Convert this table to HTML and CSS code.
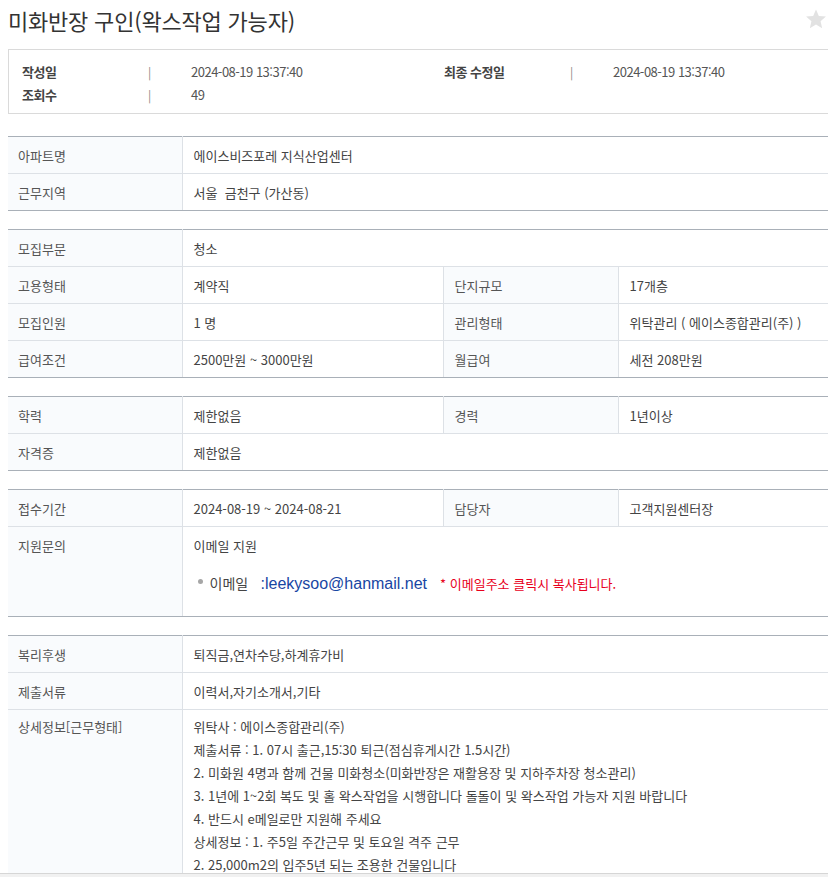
FILE: index.html
```html
<!DOCTYPE html>
<html lang="ko">
<head>
<meta charset="utf-8">
<title>미화반장 구인(왁스작업 가능자)</title>
<link rel="stylesheet" href="styles.css">
</head>
<body>
<div class="wrap">
  <div class="title-row">
    <h1 class="title">미화반장 구인(왁스작업 가능자)</h1>
    <svg class="star" viewBox="0 0 24 24" width="22" height="22"><path d="M12 1.5l3.1 7.1 7.7.7-5.8 5.1 1.7 7.6L12 18l-6.7 4 1.7-7.6-5.8-5.1 7.7-.7z" fill="#e2e2e2"/></svg>
  </div>

  <div class="meta">
    <div class="meta-row">
      <span class="m-label">작성일</span><span class="m-sep">|</span><span class="m-val">2024-08-19 13:37:40</span>
      <span class="m-label">최종 수정일</span><span class="m-sep">|</span><span class="m-val">2024-08-19 13:37:40</span>
    </div>
    <div class="meta-row">
      <span class="m-label">조회수</span><span class="m-sep">|</span><span class="m-val">49</span>
    </div>
  </div>

  <table class="info">
    <colgroup><col class="c1"><col class="c2"><col class="c3"><col class="c4"></colgroup>
    <tr><th>아파트명</th><td colspan="3">에이스비즈포레 지식산업센터</td></tr>
    <tr><th>근무지역</th><td colspan="3">서울 &nbsp;금천구 (가산동)</td></tr>
  </table>

  <table class="info">
    <colgroup><col class="c1"><col class="c2"><col class="c3"><col class="c4"></colgroup>
    <tr><th>모집부문</th><td colspan="3">청소</td></tr>
    <tr><th>고용형태</th><td>계약직</td><th class="th2">단지규모</th><td>17개층</td></tr>
    <tr><th>모집인원</th><td>1 명</td><th class="th2">관리형태</th><td>위탁관리 ( 에이스종합관리(주) )</td></tr>
    <tr><th>급여조건</th><td>2500만원 ~ 3000만원</td><th class="th2">월급여</th><td>세전 208만원</td></tr>
  </table>

  <table class="info">
    <colgroup><col class="c1"><col class="c2"><col class="c3"><col class="c4"></colgroup>
    <tr><th>학력</th><td>제한없음</td><th class="th2">경력</th><td>1년이상</td></tr>
    <tr><th>자격증</th><td colspan="3">제한없음</td></tr>
  </table>

  <table class="info">
    <colgroup><col class="c1"><col class="c2"><col class="c3"><col class="c4"></colgroup>
    <tr><th>접수기간</th><td>2024-08-19 ~ 2024-08-21</td><th class="th2">담당자</th><td>고객지원센터장</td></tr>
    <tr class="tall"><th>지원문의</th><td colspan="3">
      <div>이메일 지원</div>
      <div class="mail-line"><span class="bullet"></span><span class="mail-label">이메일</span><a class="mail" href="#">:leekysoo@hanmail.net</a><span class="note">* 이메일주소 클릭시 복사됩니다.</span></div>
    </td></tr>
  </table>

  <table class="info">
    <colgroup><col class="c1"><col class="c2"><col class="c3"><col class="c4"></colgroup>
    <tr><th>복리후생</th><td colspan="3">퇴직금,연차수당,하계휴가비</td></tr>
    <tr><th>제출서류</th><td colspan="3">이력서,자기소개서,기타</td></tr>
    <tr class="detail"><th>상세정보[근무형태]</th><td colspan="3">
      <div>위탁사 : 에이스종합관리(주)</div>
      <div>제출서류 : 1. 07시 출근,15:30 퇴근(점심휴게시간 1.5시간)</div>
      <div>2. 미화원 4명과 함께 건물 미화청소(미화반장은 재활용장 및 지하주차장 청소관리)</div>
      <div>3. 1년에 1~2회 복도 및 홀 왁스작업을 시행합니다 돌돌이 및 왁스작업 가능자 지원 바랍니다</div>
      <div>4. 반드시 e메일로만 지원해 주세요</div>
      <div>상세정보 : 1. 주5일 주간근무 및 토요일 격주 근무</div>
      <div>2. 25,000m2의 입주5년 되는 조용한 건물입니다</div>
    </td></tr>
  </table>
</div>
<div class="bottom-bar"></div>
</body>
</html>
```
FILE: styles.css
```css
html, body {
  margin: 0;
  padding: 0;
  overflow: hidden;
  background: #fff;
}
body {
  padding-left: 8px;
  font-family: "Noto Sans CJK KR", "Noto Sans", sans-serif;
  color: #444;
  font-size: 13px;
}
.wrap {
  width: 822px;
}
.title-row {
  display: flex;
  justify-content: space-between;
  align-items: center;
  height: 40px;
}
.title {
  margin: 0;
  font-size: 22px;
  font-weight: 400;
  color: #333;
  letter-spacing: -0.2px;
  line-height: 40px;
}
.star {
  margin-right: 3px;
  margin-top: -2px;
}
.meta {
  margin-top: 9px;
  border: 1px solid #dadada;
  padding: 10px 0 7px 13px;
  letter-spacing: -0.5px;
}
.meta-row {
  display: grid;
  grid-template-columns: 126px 43px 253px 126px 43px 1fr;
  line-height: 23px;
  height: 23px;
}
.m-label {
  font-weight: 700;
  color: #444;
}
.m-sep {
  color: #888;
  font-size: 12px;
}
.m-val {
  color: #555;
}
.info {
  width: 822px;
  table-layout: fixed;
  border-collapse: collapse;
  margin-top: 18px;
  border-top: 1px solid #a9b0b8;
  border-bottom: 1px solid #a9b0b8;
}
.meta + .info {
  margin-top: 22px;
}
.c1 { width: 174px; }
.c2 { width: 261px; }
.c3 { width: 175px; }
.info th, .info td {
  height: 36px;
  padding: 0;
  border-bottom: 1px solid #dde1e6;
  font-weight: 400;
  text-align: left;
  vertical-align: middle;
  line-height: 23px;
}
.info tr:last-child th, .info tr:last-child td {
  border-bottom: 1px solid #a9b0b8;
}
.info th {
  background: #f9fbfd;
  padding-left: 10px;
  color: #555;
  border-right: 1px solid #dde1e6;
}
.info td {
  padding-left: 11px;
  color: #444;
}
.info th.th2 {
  border-left: 1px solid #dde1e6;
  padding-left: 11px;
}
.tall th, .tall td {
  height: 82px;
  vertical-align: top;
  padding-top: 7px;
}
.mail-line {
  display: flex;
  align-items: center;
  margin-top: 15px;
  height: 23px;
}
.bullet {
  width: 5px;
  height: 5px;
  border-radius: 50%;
  background: #a6a6a6;
  margin-left: 4px;
  margin-right: 7px;
  margin-top: -4px;
}
.mail-label {
  font-size: 14px;
  color: #444;
  width: 51px;
}
.mail {
  font-family: "Liberation Sans", Arial, sans-serif;
  font-size: 16px;
  color: #1846a3;
  text-decoration: none;
  margin-right: 13px;
}
.note {
  color: #e8001c;
  font-size: 13px;
}
.detail th, .detail td {
  vertical-align: top;
  padding-top: 5px;
  padding-bottom: 10px;
}
.bottom-bar {
  position: fixed;
  left: 0;
  right: 0;
  top: 873px;
  height: 4px;
  background: #f1f1f1;
  border-top: 1px solid #d6d6d6;
}
```
